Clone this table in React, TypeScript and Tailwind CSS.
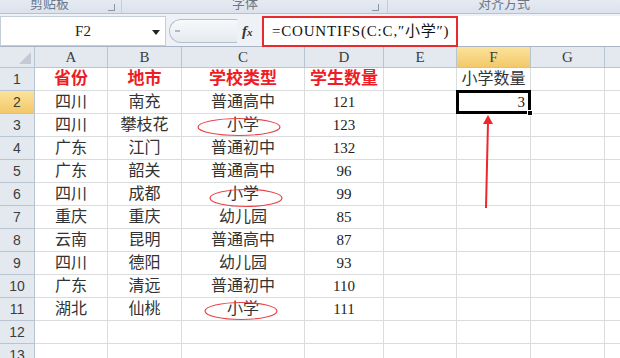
import React from "react";

const cols = [
  { k: "A", w: "w-[73px]" },
  { k: "B", w: "w-[74px]" },
  { k: "C", w: "w-[123px]" },
  { k: "D", w: "w-[79px]" },
  { k: "E", w: "w-[73px]" },
  { k: "F", w: "w-[74px]" },
  { k: "G", w: "w-[74px]" },
];

const rows: string[][] = [
  ["四川", "南充", "普通高中", "121"],
  ["四川", "攀枝花", "小学", "123"],
  ["广东", "江门", "普通初中", "132"],
  ["广东", "韶关", "普通高中", "96"],
  ["四川", "成都", "小学", "99"],
  ["重庆", "重庆", "幼儿园", "85"],
  ["云南", "昆明", "普通高中", "87"],
  ["四川", "德阳", "幼儿园", "93"],
  ["广东", "清远", "普通初中", "110"],
  ["湖北", "仙桃", "小学", "111"],
  ["", "", "", ""],
  ["", "", "", ""],
];

const cjk = "font-['Liberation_Serif','Noto_Sans_CJK_SC',serif]";

function RowHead({ n, active }: { n: number; active?: boolean }) {
  return (
    <div
      className={`w-[35px] shrink-0 flex items-center justify-center border-r border-b border-[#b9c4d2] text-[14px] text-[#3d3d3d] font-['Liberation_Sans',sans-serif] ${
        active ? "bg-gradient-to-b from-[#fbe39a] to-[#f3c869]" : "bg-[#e4e9f0]"
      }`}
    >
      {n}
    </div>
  );
}

function Cell({ w, children, className = "" }: { w: string; children?: React.ReactNode; className?: string }) {
  return (
    <div className={`${w} shrink-0 flex items-center border-r border-b border-[#dadcdd] ${className}`}>
      {children}
    </div>
  );
}

export default function App() {
  return (
    <div className="relative w-[620px] h-[358px] overflow-hidden bg-white">
      {/* ribbon group labels, cut at top */}
      <div className={`h-[14px] flex bg-gradient-to-b from-[#e6ebf2] to-[#dbe2ec] border-b border-[#b8c2cf] overflow-hidden text-[13px] text-[#6b7686] ${cjk}`}>
        <div className="w-[122px] flex items-end border-r border-[#c3ccd8] relative">
          <span className="ml-[30px] mb-[1px] leading-[16px]">剪贴板</span>
          <span className="ml-auto mr-[6px] mb-[2px] w-[7px] h-[7px] border-r border-b border-[#8a96a6]" />
        </div>
        <div className="w-[266px] flex items-end border-r border-[#c3ccd8]">
          <span className="ml-[110px] mb-[1px] leading-[16px]">字体</span>
          <span className="ml-auto mr-[8px] mb-[2px] w-[7px] h-[7px] border-r border-b border-[#8a96a6]" />
        </div>
        <div className="flex-1 flex items-end">
          <span className="ml-[90px] mb-[1px] leading-[16px]">对齐方式</span>
        </div>
      </div>

      {/* formula bar */}
      <div className="h-[33px] flex items-stretch bg-[#eef1f6] border-b border-[#a9b5c4] pt-[2px]">
        <div className="w-[166px] flex items-center bg-white border border-[#c5cdd8] relative">
          <span className={`flex-1 text-center text-[15px] text-[#222] ${cjk}`}>F2</span>
          <span className="absolute right-[5px] top-[13px] w-0 h-0 border-l-[4px] border-r-[4px] border-t-[5px] border-l-transparent border-r-transparent border-t-[#222]" />
        </div>
        <div className="w-[96px] flex items-center">
          <div className="ml-[3px] w-[68px] h-[24px] rounded-l-full border border-r-0 border-[#b6c0cc] bg-gradient-to-b from-[#f7f9fb] to-[#e6eaf0] flex items-center">
            <span className="ml-[5px] w-[5px] h-[2px] bg-[#b0b8c3]" />
          </div>
          <span className="ml-[5px] text-[15px] italic font-bold text-[#333] font-['Liberation_Serif',serif]">
            f<span className="text-[11px]">x</span>
          </span>
        </div>
        <div className="flex-1 bg-white flex items-center relative">
          <div className="absolute left-0 top-0 w-[196px] h-[31px] border-2 border-[#e8292e]" />
          <span className={`ml-[10px] text-[15px] text-[#111] tracking-[0.8px] ${cjk}`}>=COUNTIFS(C:C,″小学″)</span>
        </div>
      </div>

      {/* column headers */}
      <div className={`h-[21px] flex text-[15px] text-[#3d3d3d] ${cjk}`}>
        <div className="w-[35px] shrink-0 bg-[#e4e9f0] border-r border-b border-[#b9c4d2] relative">
          <svg className="absolute right-[3px] bottom-[3px]" width="12" height="12">
            <polygon points="12,0 12,12 0,12" fill="#c3cad3" />
          </svg>
        </div>
        {cols.map((c) => (
          <div
            key={c.k}
            className={`${c.w} shrink-0 flex items-center justify-center border-r border-b border-[#b9c4d2] ${
              c.k === "F" ? "bg-gradient-to-b from-[#fbe39a] to-[#f3c869]" : "bg-[#e4e9f0]"
            }`}
          >
            {c.k}
          </div>
        ))}
        <div className="flex-1 bg-[#e4e9f0] border-b border-[#b9c4d2]" />
      </div>

      {/* row 1 */}
      <div className={`h-[23px] flex ${cjk}`}>
        <RowHead n={1} />
        <Cell w={cols[0].w} className="justify-center text-[17px] font-bold text-[#ee1c25]">省份</Cell>
        <Cell w={cols[1].w} className="justify-center text-[17px] font-bold text-[#ee1c25]">地市</Cell>
        <Cell w={cols[2].w} className="justify-center text-[17px] font-bold text-[#ee1c25]">学校类型</Cell>
        <Cell w={cols[3].w} className="justify-center text-[17px] font-bold text-[#ee1c25]">学生数量</Cell>
        <Cell w={cols[4].w} />
        <Cell w={cols[5].w} className="justify-center text-[16px] text-[#333]">小学数量</Cell>
        <Cell w={cols[6].w} />
        <div className="flex-1 border-b border-[#dadcdd]" />
      </div>

      {rows.map((r, i) => (
        <div key={i} className={`h-[23px] flex text-[16px] text-[#333] ${cjk}`}>
          <RowHead n={i + 2} active={i === 0} />
          <Cell w={cols[0].w} className="justify-center">{r[0]}</Cell>
          <Cell w={cols[1].w} className="justify-center">{r[1]}</Cell>
          <Cell w={cols[2].w} className="justify-center">{r[2]}</Cell>
          <Cell w={cols[3].w} className="justify-center text-[15px] text-[#222]">{r[3]}</Cell>
          <Cell w={cols[4].w} />
          {i === 0 ? (
            <Cell w={cols[5].w} className="relative justify-end">
              <div className="absolute -left-[1px] -top-[1px] w-[75px] h-[24px] border-[3px] border-black" />
              <span className="absolute -right-[3px] -bottom-[3px] w-[6px] h-[6px] bg-black border border-white" />
              <span className="mr-[5px] text-[15px] text-[#222]">3</span>
            </Cell>
          ) : (
            <Cell w={cols[5].w} />
          )}
          <Cell w={cols[6].w} />
          <div className="flex-1 border-b border-[#dadcdd]" />
        </div>
      ))}

      {/* annotations */}
      <svg className="absolute left-0 top-0 pointer-events-none" width="620" height="358">
        <ellipse cx="239" cy="127" rx="41" ry="8.5" fill="none" stroke="#e8454a" strokeWidth="1.2" />
        <ellipse cx="246" cy="198" rx="36" ry="8.5" fill="none" stroke="#e8454a" strokeWidth="1.2" />
        <ellipse cx="241" cy="311" rx="36" ry="8.5" fill="none" stroke="#e8454a" strokeWidth="1.2" />
        <line x1="486" y1="208" x2="488" y2="122" stroke="#f0262b" strokeWidth="2" />
        <polygon points="488,115 483,124 493,124" fill="#f0262b" />
      </svg>
    </div>
  );
}
